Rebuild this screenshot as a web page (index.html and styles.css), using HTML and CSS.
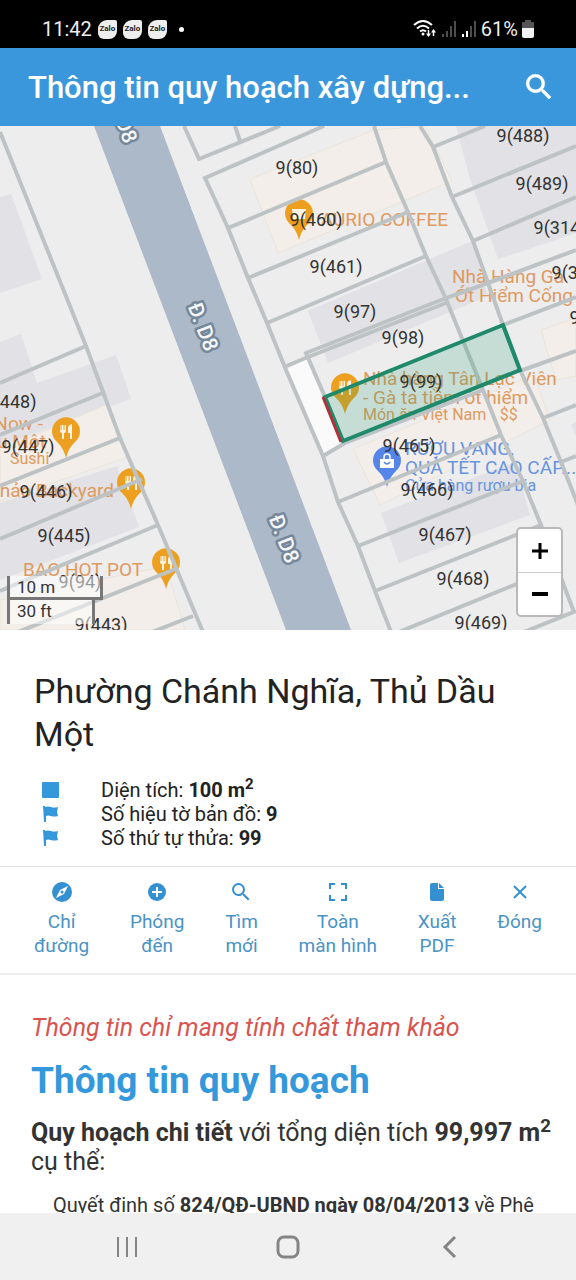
FILE: index.html
```
<!DOCTYPE html>
<html lang="vi">
<head>
    <meta charset="UTF-8">
    <meta name="viewport" content="width=device-width, initial-scale=1.0">
    <title>Thông tin quy hoạch xây dựng</title>
    <link rel="stylesheet" href="styles.css">
</head>
<body>
    <div class="status-bar">
        <div class="status-left">
            <span>11:42</span>
            <span class="zalo">Zalo</span>
            <span class="zalo">Zalo</span>
            <span class="zalo">Zalo</span>
            <span class="dot"></span>
        </div>
        <div class="status-right">
            <svg width="24" height="20" viewBox="0 0 24 20" fill="none" stroke="#fff" stroke-width="2">
                <path d="M1 6Q10-2 19 6M4 9.500Q10 4 16 9.500M7 12.500Q10 10 13 12.500"/>
                <circle cx="10" cy="15" r="1.500" fill="#fff" stroke="none"/>
                <path d="M15.500 11v6M20.500 17v-6" stroke-width="1.500"/>
                <path d="M13 14.500h5L15.500 18zM18 13.500h5L20.500 10z" fill="#fff" stroke="none"/>
            </svg>
            <svg width="16" height="18" viewBox="0 0 16 18" fill="#4d4d4d">
                <path d="M1 14h2v3H1zM5 11h2v6H5zM9 6h2v11H9zM13 1h2v16h-2z"/>
            </svg>
            <svg width="16" height="18" viewBox="0 0 16 18" fill="#4d4d4d">
                <path d="M1 14h2v3H1zM5 11h2v6H5z" fill="#fff"/>
                <path d="M9 6h2v11H9zM13 1h2v16h-2z"/>
            </svg>
            <span>61%</span>
            <svg width="12" height="18" viewBox="0 0 12 18">
                <path d="M3 0h6v2h3v7H0V2h3z" fill="#555"/>
                <path d="M0 8h12v8a2 2 0 0 1-2 2H2a2 2 0 0 1-2-2z" fill="#f2f2f2"/>
            </svg>
        </div>
    </div>

    <header class="app-bar">
        <h1>Thông tin quy hoạch xây dựng...</h1>
        <button class="search-button" aria-label="Tìm kiếm">
            <svg width="34" height="34" viewBox="0 0 24 24" fill="#fff" stroke="#fff" stroke-width="0.400"><path d="M15.500 14h-.79l-.28-.27A6.470 6.470 0 0 0 16 9.500 6.500 6.500 0 1 0 9.500 16c1.610 0 3.090-.59 4.230-1.570l.27.28v.79l5 4.990L20.490 19l-4.990-5zm-6 0C7.010 14 5 11.990 5 9.500S7.010 5 9.500 5 14 7.010 14 9.500 11.990 14 9.500 14z"/></svg>
        </button>
    </header>

    <div class="map">
        <svg class="map-canvas" viewBox="0 126 576 504">
            <defs>
                <path id="pin" d="M0 26C-2 18-5 14-9 10A14 14 0 1 1 9 10C5 14 2 18 0 26z"/>
                <g id="food">
                    <use href="#pin" fill="#eda01f"/>
                    <path d="M-6-7v6q0 2 2 2v6h2v-6q2 0 2-2v-6h-1.500v5h-1v-5h-2v5h-1v-5zM2-4q0-3 4-4v15H4V1H2z" fill="#fdf3e2"/>
                </g>
            </defs>

            <g class="building">
                <path d="M0 197L11 194 42 279 0 293z"/>
                <path d="M0 342L21 334 37 383 116 355 131 399 0 446z"/>
                <path d="M0 503L117 466 139 527 0 580z"/>
                <path d="M456 126L469 176 498 259 576 233V126z"/>
                <path d="M308 311L472 241 488 296 328 363z"/>
                <path d="M381 513L515 462 530 515 399 563z"/>
                <path d="M571 425L576 422V436z"/>
            </g>
            <g class="shop">
                <path d="M250 179L374 130 425 126 452 181 278 253z"/>
                <path d="M0 450L108 404 128 457 0 501z"/>
                <path d="M0 600L166 566 185 630H0z"/>
                <path d="M353 449L534 375 550 420 380 505z"/>
                <path d="M541 330L576 318V376L556 380z"/>
            </g>

            <path class="road" d="M94 126H160L351 630H286z"/>
            <path class="free-lot" d="M286 370L308 358 342 442 323 456z"/>

            <g class="street">
                <text transform="translate(203 327) rotate(69)" y="7">Đ. D8</text>
                <text transform="translate(284 539) rotate(69)" y="7">Đ. D8</text>
                <text transform="translate(122 119) rotate(69)" y="7">Đ. D8</text>
            </g>

            <use href="#food" x="66" y="432"/>
            <use href="#food" x="131" y="483"/>
            <use href="#food" x="166" y="563"/>
            <use href="#food" x="345" y="388"/>
            <g transform="translate(299 214)">
                <use href="#pin" fill="#eda01f"/>
                <path d="M-7-5H7L6 5H-6z" fill="#fdf3e2"/>
            </g>
            <g transform="translate(387 461)">
                <use href="#pin" fill="#5685ea"/>
                <path d="M-7-2H7V7H-7z" fill="#fff"/>
                <path d="M-3-2v-2a3 3 0 0 1 6 0v2" fill="none" stroke="#fff" stroke-width="1.500"/>
                <path d="M-3 1q3 4 6 0" fill="none" stroke="#5685ea" stroke-width="1.500"/>
            </g>

            <g class="poi">
                <text x="448" y="226" text-anchor="end">AURIO COFFEE</text>
                <text x="452" y="283">Nhà Hàng Gà</text>
                <text x="455" y="302">Ớt Hiểm Cống</text>
                <text x="363" y="385">Nhà hàng Tân Lạc Viên</text>
                <text x="363" y="404">- Gà ta tiềm ớt hiểm</text>
                <text x="363" y="420" class="small">Món ăn Việt Nam • $$</text>
                <text x="43" y="430" text-anchor="end">Now -</text>
                <text x="46" y="448" text-anchor="end">Thủ Dầu Một</text>
                <text x="10" y="464" class="small">Sushi</text>
                <text x="114" y="497" text-anchor="end">Khảo Backyard</text>
                <text x="23" y="576">BAO HOT POT</text>
            </g>
            <g class="poi poi-blue">
                <text x="405" y="455">RƯỢU VANG,</text>
                <text x="405" y="474">QUÀ TẾT CAO CẤP...</text>
                <text x="405" y="491" class="small">Cửa hàng rượu bia</text>
            </g>

            <g class="parcel">
                <path d="M0 132L86 346 120 438 158 525 203 632"/>
                <path d="M86 346L0 383M105 392L0 435M120 438L0 486M142 479L0 539M158 525L0 591M178 568L18 632M193 616L152 632"/>
                <path d="M184 126L199 159 280 126M235 126L240 141"/>
                <path d="M324 126L205 178 228 228 248 278 267 323 286 370 323 456 338 502 358 546 375 591 391 632"/>
                <path d="M374 126L386 162 408 212 426 256 446 299 483 390 501 435 523 481 541 525 574 612"/>
                <path d="M420 126L433 147 452 197 473 241 488 283 503 325 520 370 543 418 561 462 578 505"/>
                <path d="M228 228L386 162M248 278L408 212M267 323L426 256M284 367L308 357 446 303"/>
                <path d="M325 397L306 353 446 298 488 283 576 250"/>
                <path d="M323 456L345 443 483 390M338 502L501 435M358 546L523 481M375 591L541 525M399 632L519 583 562 566M524 632L576 611"/>
                <path d="M433 147L485 126M452 197L576 146M473 241L576 197M503 325L576 297M520 371L576 351M543 418L576 405M561 462L576 456"/>
            </g>

            <path class="selected" d="M325 397L503 325 520 370 343 441z"/>
            <path class="frontage" d="M323 397L341 442"/>

            <g class="number">
                <text x="297" y="174">9(80)</text>
                <text x="316" y="226">9(460)</text>
                <text x="336" y="273">9(461)</text>
                <text x="355" y="318">9(97)</text>
                <text x="403" y="344">9(98)</text>
                <text x="421" y="388">9(99)</text>
                <text x="409" y="452">9(465)</text>
                <text x="427" y="496">9(466)</text>
                <text x="445" y="541">9(467)</text>
                <text x="463" y="585">9(468)</text>
                <text x="481" y="629">9(469)</text>
                <text x="523" y="142">9(488)</text>
                <text x="542" y="190">9(489)</text>
                <text x="560" y="234">9(314)</text>
                <text x="578" y="279">9(313)</text>
                <text x="596" y="324">9(312)</text>
                <text x="10" y="408">9(448)</text>
                <text x="28" y="453">9(447)</text>
                <text x="46" y="498">9(446)</text>
                <text x="64" y="542">9(445)</text>
                <text x="80" y="588">9(94)</text>
                <text x="101" y="631">9(443)</text>
            </g>
        </svg>
        <div class="scale">
            <div class="scale-line scale-metric">10 m</div>
            <div class="scale-line scale-feet">30 ft</div>
        </div>
        <div class="zoom">
            <button aria-label="Phóng to"><svg width="18" height="18" viewBox="0 0 18 18"><path d="M1 9h16M9 1v16" stroke="#000" stroke-width="3"/></svg></button>
            <button aria-label="Thu nhỏ"><svg width="18" height="18" viewBox="0 0 18 18"><path d="M1 9h16" stroke="#000" stroke-width="4"/></svg></button>
        </div>
    </div>

    <main class="details">
        <section class="place">
            <h2>Phường Chánh Nghĩa, Thủ Dầu Một</h2>
            <ul class="facts">
                <li>
                    <svg width="18" height="18" viewBox="0 0 18 18" fill="#3498db"><rect x="0" y="1" width="17" height="16" rx="1"/></svg>
                    <span>Diện tích: <b>100 m<sup>2</sup></b></span>
                </li>
                <li>
                    <svg width="18" height="18" viewBox="0 0 18 18" fill="#3498db"><path d="M1 1h2v1q3-1 6 0t7 0l-1 5 1 4q-4 1-7 0t-5 0v6H2z"/></svg>
                    <span>Số hiệu tờ bản đồ: <b>9</b></span>
                </li>
                <li>
                    <svg width="18" height="18" viewBox="0 0 18 18" fill="#3498db"><path d="M1 1h2v1q3-1 6 0t7 0l-1 5 1 4q-4 1-7 0t-5 0v6H2z"/></svg>
                    <span>Số thứ tự thửa: <b>99</b></span>
                </li>
            </ul>
        </section>

        <div class="actions">
            <button>
                <svg width="24" height="24" viewBox="0 0 24 24"><circle cx="12" cy="12" r="10" fill="#3490d0"/><path d="M18 6l-4 8-8 4 4-8z" fill="#fff"/><circle cx="12" cy="12" r="1.500" fill="#3490d0"/></svg>
                Chỉ<br>đường
            </button>
            <button>
                <svg width="24" height="24" viewBox="0 0 24 24"><circle cx="12" cy="12" r="9" fill="#3490d0"/><path d="M12 7v10M7 12h10" stroke="#fff" stroke-width="2"/></svg>
                Phóng<br>đến
            </button>
            <button>
                <svg width="24" height="24" viewBox="0 0 24 24" fill="#3490d0"><path d="M15.500 14h-.79l-.28-.27A6.470 6.470 0 0 0 16 9.500 6.500 6.500 0 1 0 9.500 16c1.610 0 3.090-.59 4.230-1.570l.27.28v.79l5 4.990L20.490 19l-4.990-5zm-6 0C7.010 14 5 11.990 5 9.500S7.010 5 9.500 5 14 7.010 14 9.500 11.990 14 9.500 14z"/></svg>
                Tìm<br>mới
            </button>
            <button>
                <svg width="24" height="24" viewBox="0 0 24 24" fill="none" stroke="#3490d0" stroke-width="2"><path d="M4 9V4h5M15 4h5v5M20 15v5h-5M9 20H4v-5"/></svg>
                Toàn<br>màn hình
            </button>
            <button>
                <svg width="24" height="24" viewBox="0 0 24 24" fill="#3490d0"><path d="M7 3h6v6h6v10a2 2 0 0 1-2 2H7a2 2 0 0 1-2-2V5a2 2 0 0 1 2-2z"/><path d="M14 3l5 5h-5z"/></svg>
                Xuất<br>PDF
            </button>
            <button>
                <svg width="24" height="24" viewBox="0 0 24 24" stroke="#3490d0" stroke-width="2"><path d="M6 6l12 12M18 6L6 18"/></svg>
                Đóng
            </button>
        </div>

        <section class="planning">
            <p class="notice">Thông tin chỉ mang tính chất tham khảo</p>
            <h2>Thông tin quy hoạch</h2>
            <p class="summary"><b>Quy hoạch chi tiết</b> với tổng diện tích <b>99,997 m<sup>2</sup></b> cụ thể:</p>
            <p class="decision">Quyết định số <b>824/QĐ-UBND ngày 08/04/2013</b> về Phê</p>
        </section>
    </main>

    <nav class="nav-bar">
        <button aria-label="Gần đây"><svg width="24" height="24" viewBox="0 0 24 24" stroke="#858585" stroke-width="2"><path d="M3 2v20M12 2v20M21 2v20"/></svg></button>
        <button aria-label="Trang chủ"><svg width="24" height="24" viewBox="0 0 24 24" fill="none" stroke="#858585" stroke-width="3"><rect x="2" y="2" width="20" height="20" rx="6"/></svg></button>
        <button aria-label="Quay lại"><svg width="24" height="24" viewBox="0 0 24 24" fill="none" stroke="#858585" stroke-width="3"><path d="M18 2L8 12l10 10"/></svg></button>
    </nav>
</body>
</html>
```

FILE: styles.css
```
* {
    box-sizing: border-box;
}
body {
    margin: 0;
    height: 100vh;
    display: flex;
    flex-direction: column;
    font-family: Roboto, "Noto Sans", sans-serif;
    color: #222;
    background-color: #fff;
}
h1, h2, p, ul {
    margin: 0;
    padding: 0;
}
button {
    font-family: inherit;
    border: none;
    background: none;
    padding: 0;
    cursor: pointer;
}
svg {
    display: block;
    flex-shrink: 0;
}
sup {
    font-size: 75%;
    line-height: 0;
}
.status-bar {
    display: flex;
    justify-content: space-between;
    align-items: center;
    flex-shrink: 0;
    height: 48px;
    padding: 10px 42px 0;
    background-color: #000;
    color: #eee;
    font-size: 20px;
}
.status-left {
    display: flex;
    align-items: center;
    gap: 6px;
}
.status-right {
    display: flex;
    align-items: center;
    gap: 4px;
}
.zalo {
    width: 19px;
    height: 19px;
    border-radius: 9px 2px 8px 6px;
    background-color: #eee;
    color: #222;
    font-size: 8px;
    font-weight: 700;
    line-height: 18px;
    text-align: center;
}
.zalo:first-of-type {
    margin-left: 4px;
}
.dot {
    width: 5px;
    height: 5px;
    margin-left: 6px;
    border-radius: 50%;
    background-color: #fff;
}
.app-bar {
    display: flex;
    justify-content: space-between;
    align-items: center;
    flex-shrink: 0;
    height: 78px;
    padding: 0 20px 0 28px;
    background-color: #3a97db;
    color: #fff;
}
.app-bar h1 {
    font-size: 31px;
    font-weight: 500;
    white-space: nowrap;
}
.map {
    position: relative;
    flex-shrink: 0;
    overflow: hidden;
    background-color: #ededee;
}
.map-canvas {
    width: 100%;
    height: auto;
}
.building {
    fill: #e1e1e6;
}
.shop {
    fill: #f3eee9;
    stroke: #ebe4d8;
}
.road {
    fill: #abb9c9;
}
.free-lot {
    fill: #fafafa;
}
.parcel {
    fill: none;
    stroke: #bdc3c5;
    stroke-width: 4;
}
.selected {
    fill: rgba(40, 160, 110, 0.2);
    stroke: #1f8a6b;
    stroke-width: 4;
}
.frontage {
    stroke: #b3303a;
    stroke-width: 3;
}
.number {
    font-size: 18px;
    fill: #333;
    text-anchor: middle;
}
.poi {
    font-size: 19px;
    fill: #de9a5f;
}
.poi-blue {
    fill: #6794e0;
}
.poi .small {
    font-size: 16px;
}
.street {
    font-size: 21px;
    font-weight: 500;
    fill: #f4f6f8;
    stroke: #75879a;
    stroke-width: 5;
    stroke-linejoin: round;
    paint-order: stroke;
    text-anchor: middle;
}
.scale {
    position: absolute;
    left: 7px;
    bottom: 6px;
    color: #333;
    font-size: 17px;
    line-height: 22px;
}
.scale-line {
    height: 24px;
    padding-left: 7px;
    border: 3px solid #777;
    border-top: none;
    background-color: rgba(255, 255, 255, 0.5);
}
.scale-metric {
    width: 96px;
}
.scale-feet {
    width: 88px;
    border-bottom: none;
}
.zoom {
    position: absolute;
    right: 13px;
    bottom: 13px;
    border: 2px solid #b9b9b9;
    border-radius: 5px;
    background-color: #fff;
}
.zoom button {
    display: flex;
    justify-content: center;
    align-items: center;
    width: 43px;
    height: 43px;
}
.zoom button + button {
    border-top: 1px solid #ccc;
}
.details {
    flex: 1;
    min-height: 0;
    overflow: hidden;
}
.place {
    padding: 40px 34px 16px;
}
.place h2 {
    font-size: 34px;
    font-weight: 400;
    line-height: 43px;
}
.facts {
    margin-top: 22px;
    list-style: none;
    font-size: 20px;
    line-height: 24px;
}
.facts li {
    display: flex;
    align-items: center;
    gap: 41px;
    padding-left: 8px;
}
.actions {
    display: flex;
    justify-content: space-between;
    align-items: flex-start;
    padding: 13px 34px 15px;
    border-top: 1px solid #ddd;
    border-bottom: 2px solid #eee;
}
.actions button {
    color: #4a93c4;
    font-size: 19px;
    line-height: 24px;
}
.actions svg {
    margin: 0 auto 6px;
}
.planning {
    padding: 37px 20px 0 31px;
    color: #333;
}
.notice {
    color: #d9534f;
    font-size: 25px;
    font-style: italic;
    line-height: 32px;
}
.planning h2 {
    margin: 13px 0;
    color: #3498db;
    font-size: 37px;
    font-weight: 700;
    line-height: 48px;
}
.summary {
    font-size: 25px;
    line-height: 29px;
}
.decision {
    margin-top: 17px;
    padding-left: 22px;
    font-size: 20px;
    line-height: 24px;
    white-space: nowrap;
}
.nav-bar {
    display: grid;
    grid-template-columns: repeat(3, 1fr);
    justify-items: center;
    align-items: center;
    flex-shrink: 0;
    height: 67px;
    padding: 0 46px;
    background-color: #f0f0f0;
}
```
